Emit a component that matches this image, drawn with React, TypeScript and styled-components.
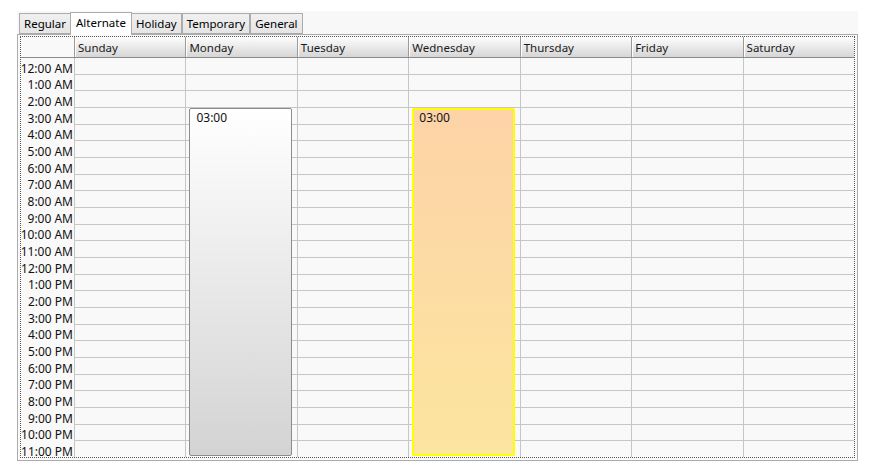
import React from 'react';
import styled, { createGlobalStyle } from 'styled-components';

const GlobalStyle = createGlobalStyle`
  html, body {
    margin: 0;
    padding: 0;
    background: #ffffff;
    font-family: 'Noto Sans', 'Open Sans', sans-serif;
  }
`;

const Shell = styled.div`
  width: 841px;
  margin: 11px 0 0 17px;
  background: #f8f8f8;
`;

const TabStrip = styled.div`
  display: flex;
  align-items: flex-end;
  height: 23px;
  padding-left: 2px;
`;

const Tab = styled.div<{ $active?: boolean }>`
  box-sizing: border-box;
  height: ${(p) => (p.$active ? '23px' : '21px')};
  margin-bottom: ${(p) => (p.$active ? '-1px' : '0')};
  margin-left: ${(p) => (p.$active ? '-1px' : '0')};
  margin-right: ${(p) => (p.$active ? '-1px' : '0')};
  padding: ${(p) => (p.$active ? '2px 5px 0 5px' : '2px 4px 0 4px')};
  border: 1px solid #acacac;
  border-bottom: ${(p) => (p.$active ? 'none' : '1px solid #acacac')};
  background: ${(p) => (p.$active ? '#ffffff' : 'linear-gradient(#f0f0f0, #e5e5e5)')};
  font-size: 11.5px;
  line-height: 16px;
  color: #000;
  white-space: nowrap;
  position: relative;
  z-index: ${(p) => (p.$active ? 2 : 1)};
  & + & {
    border-left: ${(p) => (p.$active ? '1px solid #acacac' : 'none')};
  }
`;

const Panel = styled.div`
  box-sizing: border-box;
  height: 427px;
  border: 1px solid #acacac;
  padding: 1px 2px 2px 2px;
  background: #f9f9f9;
`;

const Focus = styled.div`
  box-sizing: border-box;
  height: 100%;
  border: 1px dotted #555;
  overflow: hidden;
`;

const Columns = '53px repeat(7, 1fr)';

const HeaderRow = styled.div`
  display: grid;
  grid-template-columns: ${Columns};
  height: 21px;
  border-bottom: 1px solid #8a8a8a;
  box-sizing: border-box;
`;

const Corner = styled.div`
  background: #f9f9f9;
`;

const DayHeader = styled.div`
  background: linear-gradient(#fdfdfd, #d6d6d6);
  border-left: 1px solid #9a9a9a;
  box-shadow: inset 1px 0 0 #ffffff;
  font-size: 11.5px;
  line-height: 20px;
  padding: 1px 0 0 3px;
  box-sizing: border-box;
  color: #1a1a1a;
  overflow: hidden;
  white-space: nowrap;
`;

const Body = styled.div`
  display: grid;
  grid-template-columns: ${Columns};
  grid-template-rows: repeat(24, 1fr);
  height: 400px;
`;

const TimeLabel = styled.div<{ $row: number }>`
  grid-column: 1;
  grid-row: ${(p) => p.$row};
  display: flex;
  align-items: flex-end;
  justify-content: flex-end;
  padding-right: 1px;
  font-size: 12px;
  line-height: 12px;
  color: #111;
  white-space: nowrap;
`;

const Cell = styled.div<{ $row: number; $col: number }>`
  grid-column: ${(p) => p.$col};
  grid-row: ${(p) => p.$row};
  border-left: 1px solid #c6c6c6;
  border-bottom: 1px solid #c6c6c6;
`;

const Appointment = styled.div<{ $col: number; $tone: 'gray' | 'peach' }>`
  grid-column: ${(p) => p.$col};
  grid-row: 4 / 25;
  z-index: 1;
  box-sizing: border-box;
  margin: 0 5px 2px 4px;
  border: ${(p) => (p.$tone === 'gray' ? '1px solid #8c8c8c' : '2px solid #ffff00')};
  border-radius: 2px;
  background: ${(p) =>
    p.$tone === 'gray'
      ? 'linear-gradient(#ffffff, #d3d3d3)'
      : 'linear-gradient(#fdd3a7, #fce59f)'};
  font-size: 12px;
  line-height: 16px;
  padding: ${(p) => (p.$tone === 'gray' ? '1px 6px' : '0 5px')};
  color: #111;
`;

const tabs = ['Regular', 'Alternate', 'Holiday', 'Temporary', 'General'];
const days = ['Sunday', 'Monday', 'Tuesday', 'Wednesday', 'Thursday', 'Friday', 'Saturday'];
const hours = Array.from({ length: 24 }, (_, i) => {
  const h = i % 12 === 0 ? 12 : i % 12;
  return `${h}:00 ${i < 12 ? 'AM' : 'PM'}`;
});

export default function App() {
  return (
    <>
      <GlobalStyle />
      <Shell>
        <TabStrip>
          {tabs.map((t) => (
            <Tab key={t} $active={t === 'Alternate'}>
              {t}
            </Tab>
          ))}
        </TabStrip>
        <Panel>
          <Focus>
            <HeaderRow>
              <Corner />
              {days.map((d) => (
                <DayHeader key={d}>{d}</DayHeader>
              ))}
            </HeaderRow>
            <Body>
              {hours.map((h, r) => (
                <React.Fragment key={h}>
                  <TimeLabel $row={r + 1}>{h}</TimeLabel>
                  {days.map((d, c) => (
                    <Cell key={d} $row={r + 1} $col={c + 2} />
                  ))}
                </React.Fragment>
              ))}
              <Appointment $col={3} $tone="gray">03:00</Appointment>
              <Appointment $col={5} $tone="peach">03:00</Appointment>
            </Body>
          </Focus>
        </Panel>
      </Shell>
    </>
  );
}
